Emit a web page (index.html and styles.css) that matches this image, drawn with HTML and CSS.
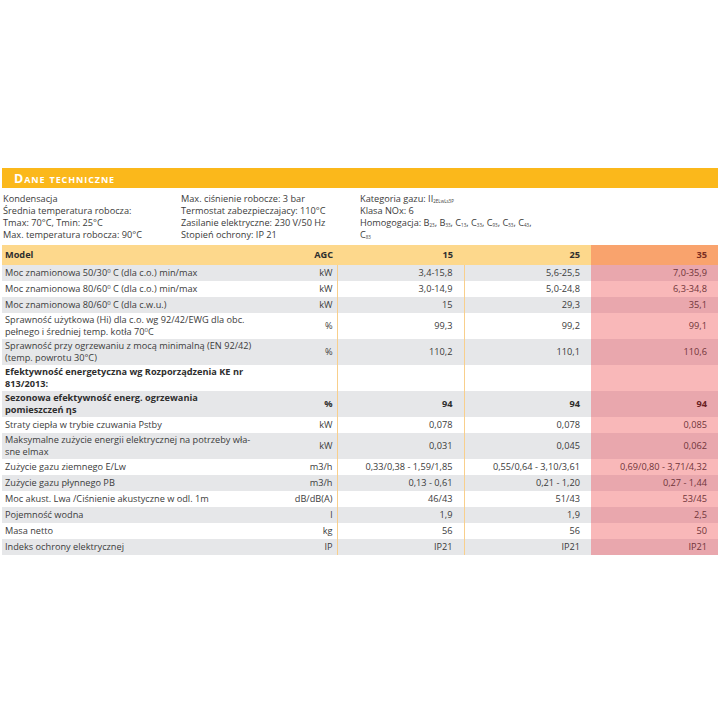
FILE: index.html
```html
<!DOCTYPE html>
<html lang="pl">
<head>
<meta charset="utf-8">
<title>Dane techniczne</title>
<link rel="stylesheet" href="styles.css">
</head>
<body>
<div class="sheet">
  <div class="bar"><span class="bar-title">Dane techniczne</span></div>
  <div class="info">
    <div class="info-col">
      <div>Kondensacja</div>
      <div>Średnia temperatura robocza:</div>
      <div>Tmax: 70°C, Tmin: 25°C</div>
      <div>Max. temperatura robocza: 90°C</div>
    </div>
    <div class="info-col">
      <div>Max. ciśnienie robocze: 3 bar</div>
      <div>Termostat zabezpieczajacy: 110°C</div>
      <div>Zasilanie elektryczne: 230 V/50 Hz</div>
      <div>Stopień ochrony: IP 21</div>
    </div>
    <div class="info-col">
      <div>Kategoria gazu: II<sub>2ELwLs3P</sub></div>
      <div>Klasa NOx: 6</div>
      <div>Homogogacja: B<sub>23</sub>, B<sub>33</sub>, C<sub>13</sub>, C<sub>33</sub>, C<sub>93</sub>, C<sub>53</sub>, C<sub>43</sub>,</div>
      <div>C<sub>83</sub></div>
    </div>
  </div>
  <table class="spec">
    <colgroup>
      <col class="c-label"><col class="c-unit"><col class="c-val"><col class="c-val"><col class="c-val">
    </colgroup>
    <thead>
      <tr class="head">
        <th class="label">Model</th><th class="unit">AGC</th><th class="v">15</th><th class="v">25</th><th class="v hl">35</th>
      </tr>
    </thead>
    <tbody>
      <tr class="g"><td class="label">Moc znamionowa 50/30<sup>0</sup> C (dla c.o.) min/max</td><td class="unit">kW</td><td class="v">3,4-15,8</td><td class="v">5,6-25,5</td><td class="v hl">7,0-35,9</td></tr>
      <tr><td class="label">Moc znamionowa 80/60<sup>0</sup> C (dla c.o.) min/max</td><td class="unit">kW</td><td class="v">3,0-14,9</td><td class="v">5,0-24,8</td><td class="v hl">6,3-34,8</td></tr>
      <tr class="g"><td class="label">Moc znamionowa 80/60<sup>0</sup> C (dla c.w.u.)</td><td class="unit">kW</td><td class="v">15</td><td class="v">29,3</td><td class="v hl">35,1</td></tr>
      <tr><td class="label">Sprawność użytkowa (Hi) dla c.o. wg 92/42/EWG dla obc.<br>pełnego i średniej temp. kotła 70<sup>0</sup>C</td><td class="unit">%</td><td class="v">99,3</td><td class="v">99,2</td><td class="v hl">99,1</td></tr>
      <tr class="g"><td class="label">Sprawność przy ogrzewaniu z mocą minimalną (EN 92/42)<br>(temp. powrotu 30°C)</td><td class="unit">%</td><td class="v">110,2</td><td class="v">110,1</td><td class="v hl">110,6</td></tr>
      <tr class="b"><td class="label">Efektywność energetyczna wg Rozporządzenia KE nr<br>813/2013:</td><td class="unit"></td><td class="v"></td><td class="v"></td><td class="v hl"></td></tr>
      <tr class="g b"><td class="label">Sezonowa efektywność energ. ogrzewania<br>pomieszczeń ηs</td><td class="unit">%</td><td class="v">94</td><td class="v">94</td><td class="v hl">94</td></tr>
      <tr><td class="label">Straty ciepła w trybie czuwania Pstby</td><td class="unit">kW</td><td class="v">0,078</td><td class="v">0,078</td><td class="v hl">0,085</td></tr>
      <tr class="g"><td class="label">Maksymalne zużycie energii elektrycznej na potrzeby wła-<br>sne elmax</td><td class="unit">kW</td><td class="v">0,031</td><td class="v">0,045</td><td class="v hl">0,062</td></tr>
      <tr><td class="label">Zużycie gazu ziemnego E/Lw</td><td class="unit">m3/h</td><td class="v">0,33/0,38 - 1,59/1,85</td><td class="v">0,55/0,64 - 3,10/3,61</td><td class="v hl">0,69/0,80 - 3,71/4,32</td></tr>
      <tr class="g"><td class="label">Zużycie gazu płynnego PB</td><td class="unit">m3/h</td><td class="v">0,13 - 0,61</td><td class="v">0,21 - 1,20</td><td class="v hl">0,27 - 1,44</td></tr>
      <tr><td class="label">Moc akust. Lwa /Ciśnienie akustyczne w odl. 1m</td><td class="unit">dB/dB(A)</td><td class="v">46/43</td><td class="v">51/43</td><td class="v hl">53/45</td></tr>
      <tr class="g"><td class="label">Pojemność wodna</td><td class="unit">l</td><td class="v">1,9</td><td class="v">1,9</td><td class="v hl">2,5</td></tr>
      <tr><td class="label">Masa netto</td><td class="unit">kg</td><td class="v">56</td><td class="v">56</td><td class="v hl">50</td></tr>
      <tr class="g"><td class="label">Indeks ochrony elektrycznej</td><td class="unit">IP</td><td class="v">IP21</td><td class="v">IP21</td><td class="v hl">IP21</td></tr>
    </tbody>
  </table>
</div>
</body>
</html>
```

FILE: styles.css
```css
html, body {
  margin: 0;
  padding: 0;
  background: #ffffff;
}

body {
  font-family: "Open Sans", "Liberation Sans", sans-serif;
  color: #3b3b3b;
}

.sheet {
  padding: 168px 2px 0 2px;
}

.bar {
  height: 20px;
  background: #fbb81b;
  display: flex;
  align-items: center;
  padding-left: 12px;
}

.bar-title {
  color: #ffffff;
  font-weight: 700;
  font-size: 12.5px;
  font-variant: small-caps;
  letter-spacing: 0.9px;
  line-height: 1;
  padding-top: 2px;
}

.info {
  display: grid;
  grid-template-columns: 178px 179px 1fr;
  padding: 5px 0 0 1px;
  font-size: 9.2px;
  line-height: 12px;
  height: 57px;
  box-sizing: border-box;
}

.info sub {
  font-size: 4.5px;
  line-height: 0;
  vertical-align: -1px;
}

.spec {
  width: 716px;
  table-layout: fixed;
  border-collapse: collapse;
  font-size: 9.2px;
  line-height: 12px;
}

.c-label { width: 275px; }
.c-unit { width: 60px; }
.c-val { width: 127px; }

.spec th, .spec td {
  padding: 1px 0;
  height: 14px;
  vertical-align: middle;
  white-space: nowrap;
}

.spec .label {
  text-align: left;
  padding-left: 3px;
}

.spec .unit {
  text-align: right;
  padding-right: 4px;
  border-right: 1px solid #f8cf8c;
}

.spec .v {
  text-align: right;
  padding-right: 11px;
}

.spec td.v:nth-child(3) {
  border-right: 1px solid #f8cf8c;
}

.spec sup {
  font-size: 6px;
  line-height: 0;
  vertical-align: 3px;
}

.spec .head th {
  background: #fdd88c;
  font-weight: 700;
  height: 18px;
  color: #2e2e2e;
  border-right: none;
}

.spec .head th.hl {
  background: #f9a36d;
  color: #7a2e22;
}

.spec tr.g td {
  background: #e6e7e9;
}

.spec td.hl {
  background: #f9b8b9;
  color: #70353a;
}

.spec tr.g td.hl {
  background: #e9a7ad;
}

.spec tr.b td {
  font-weight: 700;
  color: #2e2e2e;
}

.spec tr.b td.hl {
  color: #6a1f24;
}
```
